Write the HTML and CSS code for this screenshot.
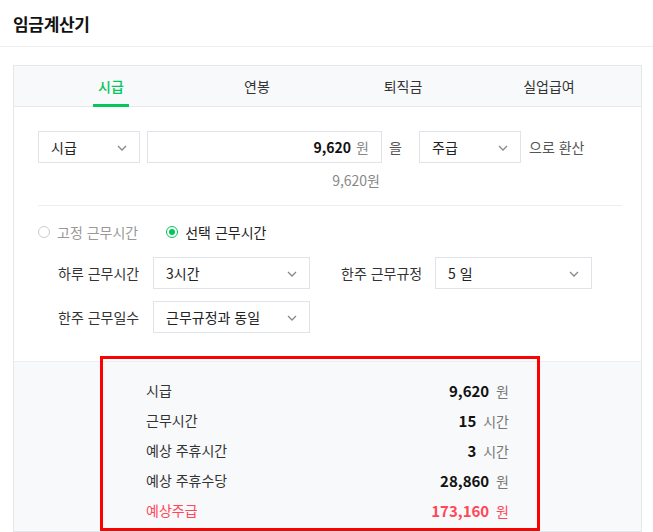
FILE: index.html
```html
<!DOCTYPE html>
<html lang="ko">
<head>
    <meta charset="UTF-8">
    <title>임금계산기</title>
    <meta name="viewport" content="width=device-width, initial-scale=1.0">
    <link rel="stylesheet" href="styles.css">
</head>
<body>
    <div class="page-head">
        <h1>임금계산기</h1>
    </div>
    <div class="calc-card">
        <div class="tabs">
            <div class="tab active">시급</div>
            <div class="tab">연봉</div>
            <div class="tab">퇴직금</div>
            <div class="tab">실업급여</div>
        </div>
        <div class="calc-body">
            <div class="convert-row">
                <div class="select unit-select">시급
                    <svg class="chevron" viewBox="0 0 10 6"><path d="M1 1L5 5L9 1" fill="none" stroke="currentColor" stroke-width="1.3"/></svg>
                </div>
                <div class="amount-input"><b>9,620</b><span class="won">원</span></div>
                <span class="josa">을</span>
                <div class="select unit-select">주급
                    <svg class="chevron" viewBox="0 0 10 6"><path d="M1 1L5 5L9 1" fill="none" stroke="currentColor" stroke-width="1.3"/></svg>
                </div>
                <span class="suffix">으로 환산</span>
            </div>
            <div class="converted">9,620원</div>
            <div class="divider"></div>
            <div class="radio-row">
                <label class="radio"><span class="dot"></span>고정 근무시간</label>
                <label class="radio checked"><span class="dot"></span>선택 근무시간</label>
            </div>
            <div class="field-row">
                <div class="field">
                    <span class="field-label">하루 근무시간</span>
                    <div class="select wide">3시간
                        <svg class="chevron" viewBox="0 0 10 6"><path d="M1 1L5 5L9 1" fill="none" stroke="currentColor" stroke-width="1.3"/></svg>
                    </div>
                </div>
                <div class="field">
                    <span class="field-label">한주 근무규정</span>
                    <div class="select wide">5 일
                        <svg class="chevron" viewBox="0 0 10 6"><path d="M1 1L5 5L9 1" fill="none" stroke="currentColor" stroke-width="1.3"/></svg>
                    </div>
                </div>
            </div>
            <div class="field-row">
                <div class="field">
                    <span class="field-label">한주 근무일수</span>
                    <div class="select wide">근무규정과 동일
                        <svg class="chevron" viewBox="0 0 10 6"><path d="M1 1L5 5L9 1" fill="none" stroke="currentColor" stroke-width="1.3"/></svg>
                    </div>
                </div>
            </div>
        </div>
        <div class="result">
            <div class="result-box">
                <div class="result-row"><span>시급</span><span class="val"><b>9,620</b> 원</span></div>
                <div class="result-row"><span>근무시간</span><span class="val"><b>15</b> 시간</span></div>
                <div class="result-row"><span>예상 주휴시간</span><span class="val"><b>3</b> 시간</span></div>
                <div class="result-row"><span>예상 주휴수당</span><span class="val"><b>28,860</b> 원</span></div>
                <div class="result-row total"><span>예상주급</span><span class="val"><b>173,160</b> 원</span></div>
            </div>
        </div>
    </div>
</body>
</html>
```

FILE: styles.css
```css
* { margin: 0; padding: 0; box-sizing: border-box; }
body {
    font-family: "Noto Sans CJK KR", "Noto Sans", sans-serif;
    font-size: 14px;
    color: #222;
    background: #fff;
    overflow: hidden;
}
.page-head {
    height: 47px;
    padding: 0 13px;
    display: flex;
    align-items: center;
    border-bottom: 1px solid #ebedf0;
}
h1 { font-size: 17px; font-weight: 700; color: #111; letter-spacing: -0.3px; }

.calc-card {
    margin: 18px 11px 0 13px;
    border: 1px solid #e4e7eb;
}
.tabs {
    display: grid;
    grid-template-columns: repeat(4, 146px);
    padding: 0 24px;
    height: 41px;
    background: #f8f9fb;
    border-bottom: 1px solid #e6e8eb;
}
.tab {
    position: relative;
    display: flex; align-items: center; justify-content: center;
    font-size: 14px; color: #333;
}
.tab.active { color: #03c75a; font-weight: 500; }
.tab.active::after {
    content: "";
    position: absolute; left: 55px; bottom: -1px;
    width: 36px; height: 3px;
    background: #03c75a;
}

.calc-body { padding: 24px 19px 28px 24px; }
.select {
    position: relative;
    height: 32px;
    border: 1px solid #e0e4ea;
    display: flex; align-items: center;
    padding-left: 12px;
    background: #fff;
    font-size: 14px; color: #222;
}
.chevron {
    position: absolute; right: 12px; top: 13px;
    width: 10px; height: 6px; color: #888;
}
.convert-row { display: flex; align-items: center; height: 32px; }
.unit-select { width: 102px; }
.amount-input {
    width: 235px; height: 32px; margin-left: 7px;
    border: 1px solid #e0e4ea;
    display: flex; align-items: center; justify-content: flex-end;
    padding-right: 12px;
}
.amount-input b { font-weight: 700; color: #111; }
.amount-input .won { color: #888; margin-left: 5px; }
.josa { width: 37px; padding-left: 7px; color: #555; }
.suffix { margin-left: 8px; color: #555; }
.converted {
    width: 344px; text-align: right; padding-right: 2px;
    margin-top: 6px; line-height: 22px;
    color: #888;
}
.divider { height: 1px; background: #eceef1; margin: 14px 0 0; width: 584px; }

.radio-row { display: flex; gap: 28px; margin-top: 16px; height: 20px; align-items: center; }
.radio { display: flex; align-items: center; gap: 7px; color: #999; }
.radio .dot {
    width: 12px; height: 12px; border-radius: 50%;
    border: 1px solid #c8ccd1; background: #fff;
}
.radio.checked { color: #222; }
.radio.checked .dot { border-color: #03c75a; position: relative; }
.radio.checked .dot::after {
    content: ""; position: absolute; left: 2px; top: 2px;
    width: 6px; height: 6px; border-radius: 50%; background: #03c75a;
}

.field-row { display: flex; margin-top: 12px; padding-left: 20px; }
.field-row:first-of-type { margin-top: 15px; }
.radio-row + .field-row { margin-top: 15px; }
.field { display: flex; align-items: center; }
.field + .field { margin-left: 31px; }
.field-label { width: 95px; color: #333; }
.field + .field .field-label { width: 94px; }
.wide { width: 157px; }

.result {
    background: #f8f9fb;
    border-top: 1px solid #eceef1;
    height: 170px;
    padding-left: 86px;
}
.result-box {
    width: 440px;
    margin-top: -6px;
    border: 3px solid #f00;
    padding: 16px 28px 3px 43px;
}
.result-row {
    display: flex; justify-content: space-between; align-items: center;
    height: 30px; color: #333;
}
.result-row .val { color: #777; }
.result-row .val b { color: #111; font-size: 15px; font-weight: 700; margin-right: 3px; }
.result-row.total, .result-row.total .val, .result-row.total .val b { color: #ff4757; }
```
